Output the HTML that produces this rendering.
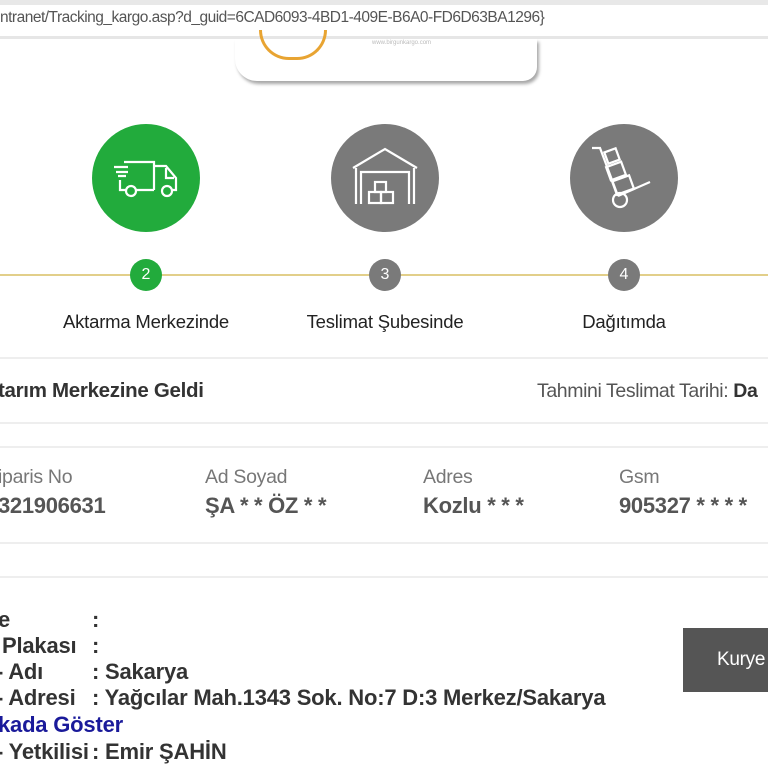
<!DOCTYPE html>
<html><head><meta charset="utf-8"><style>
*{margin:0;padding:0;box-sizing:border-box}
body{width:768px;height:768px;overflow:hidden;background:#fff;font-family:"Liberation Sans",sans-serif;position:relative;color:#333}
.a{position:absolute;white-space:nowrap}
.hl{position:absolute;left:0;width:768px;height:2px;background:#eee}
.big{position:absolute;width:108px;height:108px;border-radius:50%;top:124px}
.sm{position:absolute;width:32px;height:32px;border-radius:50%;top:259px;color:#fff;font-size:16px;text-align:center;line-height:32px}
.lab{position:absolute;top:311px;font-size:18.5px;color:#222;transform:translateX(-50%);letter-spacing:-0.2px}
.k{font-size:19.5px;color:#777;top:466px;letter-spacing:-0.3px}
.v{font-size:22px;color:#555;font-weight:bold;top:493px;letter-spacing:-0.3px}
.b{font-size:22px;font-weight:bold;color:#333;letter-spacing:-0.2px}
</style></head><body>
<div class="a" style="left:0;top:0;width:768px;height:5px;background:#e8e8e8"></div>
<div class="a" style="left:0;top:36px;width:768px;height:3px;background:#e6e6e6"></div>
<div class="a" style="left:0;top:9px;font-size:15.5px;color:#555;letter-spacing:-0.5px">ntranet/Tracking_kargo.asp?d_guid=6CAD6093-4BD1-409E-B6A0-FD6D63BA1296}</div>
<div class="a" style="left:235px;top:39px;width:302px;height:42px;background:#fff;border-radius:0 0 14px 22px;box-shadow:2px 3px 3px rgba(0,0,0,0.35)"></div>
<div class="a" style="left:259px;top:30px;width:68px;height:30px;border:3px solid #e8a432;border-top:none;border-radius:0 0 34px 34px"></div>
<div class="a" style="left:372px;top:40px;font-size:6px;color:#bbb">www.birgunkargo.com</div>

<div class="a" style="left:0;top:274px;width:768px;height:2px;background:#e2cf8a"></div>

<div class="big" style="left:92px;background:#22ab3c"></div>
<svg class="a" style="left:112px;top:154px" width="70" height="50" viewBox="0 0 70 50" fill="none" stroke="#fff" stroke-width="2.2">
<path d="M12 8h30v28M2 13h14M4 18h12M6 22h8M8 26v10h6M24 36h18"/><path d="M42 12h12l10 12v12h-4M54 14v10h8"/><circle cx="19" cy="37" r="5"/><circle cx="55" cy="37" r="5"/></svg>

<div class="big" style="left:331px;background:#7a7a7a"></div>
<svg class="a" style="left:351px;top:146px" width="70" height="62" viewBox="0 0 70 62" fill="none" stroke="#fff" stroke-width="2.2">
<path d="M2 22L34 3l32 19M5 22v36M63 22v36M10 58V26h48v32"/><rect x="24" y="36" width="11" height="10"/><rect x="18" y="46" width="12" height="11"/><rect x="30" y="46" width="12" height="11"/></svg>

<div class="big" style="left:570px;background:#7a7a7a"></div>
<svg class="a" style="left:588px;top:142px" width="70" height="70" viewBox="0 0 70 70" fill="none" stroke="#fff" stroke-width="2.2">
<path d="M4 6l8 0 18 48M30 54l32-14"/><circle cx="32" cy="58" r="7"/><rect x="20" y="22" width="16" height="14" transform="rotate(-20 28 29)"/><rect x="26" y="36" width="18" height="14" transform="rotate(-20 35 43)"/><rect x="18" y="8" width="12" height="12" transform="rotate(-20 24 14)"/></svg>

<div class="sm" style="left:130px;background:#22ab3c">2</div>
<div class="sm" style="left:369px;background:#7a7a7a">3</div>
<div class="sm" style="left:608px;background:#7a7a7a">4</div>
<div class="lab" style="left:146px">Aktarma Merkezinde</div>
<div class="lab" style="left:385px">Teslimat Şubesinde</div>
<div class="lab" style="left:624px">Dağıtımda</div>

<div class="hl" style="top:357px"></div>
<div class="a" style="left:-2px;top:379px;font-size:20.5px;font-weight:bold;color:#333;letter-spacing:-0.3px">tarım Merkezine Geldi</div>
<div class="a" style="left:537px;top:380px;font-size:19.5px;color:#555;letter-spacing:-0.4px">Tahmini Teslimat Tarihi: <b style="color:#333">Da</b></div>
<div class="hl" style="top:422px"></div>
<div class="hl" style="top:446px"></div>
<div class="a k" style="left:-2px">iparis No</div>
<div class="a v" style="left:-2px">321906631</div>
<div class="a k" style="left:205px">Ad Soyad</div>
<div class="a v" style="left:205px">ŞA * * ÖZ * *</div>
<div class="a k" style="left:423px">Adres</div>
<div class="a v" style="left:423px">Kozlu * * *</div>
<div class="a k" style="left:619px">Gsm</div>
<div class="a v" style="left:619px">905327 * * * *</div>
<div class="hl" style="top:542px"></div>
<div class="hl" style="top:576px"></div>

<div class="a b" style="left:-2px;top:607px">e</div><div class="a b" style="left:92px;top:607px">:</div>
<div class="a b" style="left:2px;top:633px">Plakası</div><div class="a b" style="left:92px;top:633px">:</div>
<div class="a b" style="left:-4px;top:659px">- Adı</div><div class="a b" style="left:92px;top:659px">: Sakarya</div>
<div class="a b" style="left:-4px;top:685px">- Adresi</div><div class="a b" style="left:92px;top:685px">: Yağcılar Mah.1343 Sok. No:7 D:3 Merkez/Sakarya</div>
<div class="a b" style="left:-2px;top:712px;color:#1a1a9a">kada Göster</div>
<div class="a b" style="left:-4px;top:739px">- Yetkilisi</div><div class="a b" style="left:92px;top:739px">: Emir ŞAHİN</div>

<div class="a" style="left:683px;top:628px;width:90px;height:64px;background:#555;color:#fff;font-size:19px;line-height:64px;padding-left:34px;letter-spacing:-0.3px">Kurye</div>
</body></html>
